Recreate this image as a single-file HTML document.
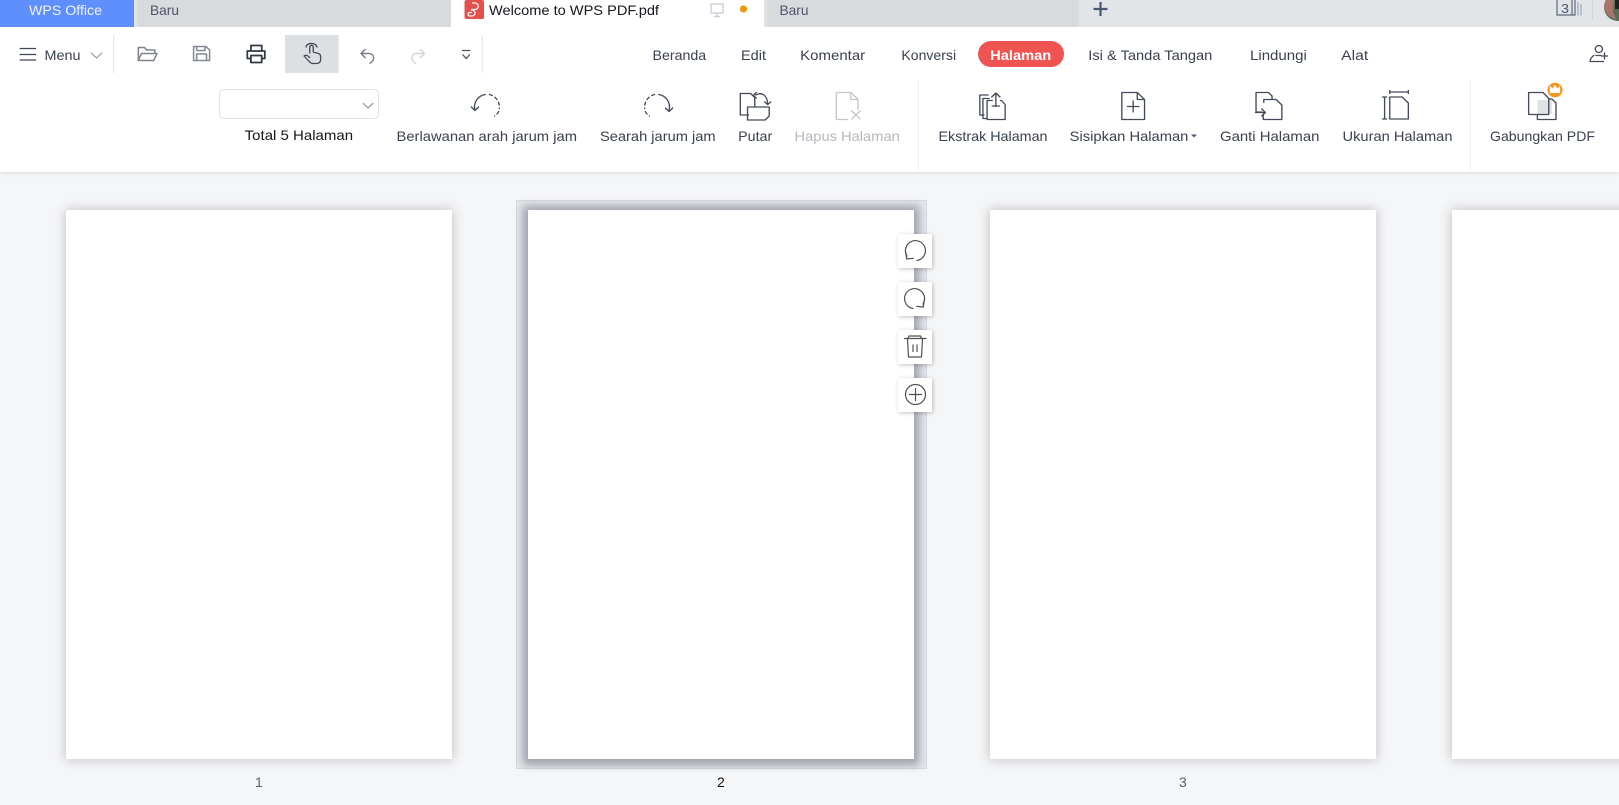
<!DOCTYPE html>
<html lang="id"><head><meta charset="utf-8"><title>WPS PDF</title>
<style>
html,body{margin:0;padding:0;width:1619px;height:805px;overflow:hidden;background:#f5f6f8}
body{position:relative;font-family:"Liberation Sans",sans-serif}
.abs{position:absolute}
#bar{left:0;top:27px;width:1619px;height:145px;background:#fff;box-shadow:0 1px 4px rgba(0,0,0,.12)}
.page{position:absolute;top:210px;width:386px;height:549px;background:#fff;box-shadow:0 0 11px 1px rgba(0,0,0,.2)}
#sel{left:516px;top:200px;width:409px;height:567px;background:#e4e6eb;border:1px solid #d8dae0}
#p2{left:528px;box-shadow:0 1px 8px 5px rgba(60,60,75,.4)}
.sb{position:absolute;left:898px;width:34px;height:34px;background:#fff;box-shadow:1px 1px 4px rgba(0,0,0,.24)}
svg{position:absolute;left:0;top:0}
text{font-family:"Liberation Sans",sans-serif;font-size:14px;fill:#3a4150}
.i{fill:none;stroke:#434a59;stroke-width:1.3;stroke-linejoin:round;stroke-linecap:round}
.g{fill:none;stroke:#c4c6cb;stroke-width:1.3;stroke-linejoin:round;stroke-linecap:round}
</style></head><body>
<div class="abs" id="bar"></div>
<div class="page" style="left:66px"></div>
<div class="abs" id="sel"></div>
<div class="page" id="p2"></div>
<div class="page" style="left:990px"></div>
<div class="page" style="left:1452px"></div>
<div class="sb" style="top:234px"></div>
<div class="sb" style="top:282px"></div>
<div class="sb" style="top:330px"></div>
<div class="sb" style="top:378px"></div>
<svg width="1619" height="805" viewBox="0 0 1619 805" xmlns="http://www.w3.org/2000/svg">
<!-- tab bar -->
<rect x="0" y="0" width="1619" height="27" fill="#e2e4e8"/>
<rect x="0" y="0" width="134" height="27" fill="#5f8ffc"/>
<rect x="137" y="0" width="314" height="27" fill="#d8dade"/>
<rect x="451" y="0" width="313" height="27" fill="#fff"/>
<rect x="767" y="0" width="312" height="27" fill="#d8dade"/>
<text x="29" y="15" textLength="73" lengthAdjust="spacingAndGlyphs" style="fill:#eef3ff">WPS Office</text>
<text x="150" y="15" textLength="29" lengthAdjust="spacingAndGlyphs" style="fill:#4d5568">Baru</text>
<rect x="464.500" y="0" width="19.500" height="19" rx="2" fill="#e5504c"/>
<path d="M472 12.500h-2.500a1.800 1.800 0 0 0 0 3.500h2.500a3 3 0 0 0 0-6h-1M472 3h3a3.200 3.200 0 0 1 0 6.500h-4" fill="none" stroke="#fff" stroke-width="1.200"/>
<text x="489" y="15" textLength="170" lengthAdjust="spacingAndGlyphs" style="fill:#14171d">Welcome to WPS PDF.pdf</text>
<path d="M711 4h12v9h-12zM717 13v3M714 16.500h6" fill="none" stroke="#c7cbd6" stroke-width="1.300"/>
<circle cx="743.500" cy="9" r="3.600" fill="#ec9a0c"/>
<text x="779.500" y="15" textLength="29" lengthAdjust="spacingAndGlyphs" style="fill:#4d5568">Baru</text>
<path d="M1100.500 2v14M1093.500 9h14" stroke="#4c586f" stroke-width="2.200" fill="none"/>
<path d="M1575 0v15h-18V0M1572 0v15.500" fill="none" stroke="#5f6a7d" stroke-width="1.200"/>
<path d="M1578 2v13.500M1581 4v11.500" fill="none" stroke="#a3a9b5" stroke-width="1.200"/>
<text x="1561" y="13" textLength="8" lengthAdjust="spacingAndGlyphs" style="fill:#4c586f;font-size:13px">3</text>
<line x1="1592.500" y1="0" x2="1592.500" y2="20" stroke="#d3d5da"/>
<circle cx="1618" cy="7" r="14" fill="#5b6a54"/>
<path d="M1604 7a14 14 0 0 1 6-11l4 4-1 12 3 7a14 14 0 0 1-12-12z" fill="#a9756a"/>
<rect x="1615" y="0" width="4" height="9" fill="#1f2421"/>
<!-- quick toolbar -->
<g transform="scale(1.0325,1)">
<path d="M19 48.500h16M19 54.500h16M19 60h16" stroke="#3f4656" stroke-width="1.300" fill="none"/>
<path d="M88 52.500l5.500 5.500 5.500-5.500" fill="none" stroke="#9a9ea8" stroke-width="1.200"/>
<line x1="110" y1="35" x2="110" y2="73" stroke="#e2e3e7"/>
<path d="M134 60V47.500h6l2 2.500h8v3M134 60.500l3-7h15l-3 7z" fill="none" stroke="#7d828d" stroke-width="1.500" stroke-linejoin="round"/>
<path d="M187.500 46.500h12l3.500 3.500v10.500h-15.500zM190.500 46.500v4h8v-4M190.500 60.500v-6.500h9.500v6.500" fill="none" stroke="#868a94" stroke-width="1.500" stroke-linejoin="round"/>
<path d="M243 51v-5.500h10.500V51M243 58.500h-3.500V51h17v7.500H253M243 55.500h10.500v7H243z" fill="none" stroke="#323947" stroke-width="1.700" stroke-linejoin="round"/>
<rect x="276" y="35" width="52" height="38" fill="#dce0e3"/>
<path d="M300 53v-6a1.700 1.700 0 0 1 3.400 0v5l5 1.500c1.500.5 2.100 1.500 2.100 3v3.500c0 2-1.500 3.500-4 3.500h-3.500c-1.500 0-2.500-.8-3.500-2l-5-5.500c1.500-1.500 3-1 5.500 1.500M296.500 47c0-4.500 9.500-5 10.500 0" class="i" style="stroke:#444a58"/>
<path d="M447.500 50.500h8M448 54.500l3.500 4 3.500-4" fill="none" stroke="#4a5161" stroke-width="1.300"/>
<line x1="467" y1="35" x2="467" y2="73" stroke="#e2e3e7"/>
<path d="M351.500 103l5 5 5-5" fill="none" stroke="#9ba0ab" stroke-width="1.300"/>
<path d="M460 110a12.500 12.500 0 0 1 10-15.500" class="i"/>
<path d="M474 94.500a12.500 12.500 0 0 1 9.500 14M483 111.500a12.500 12.500 0 0 1-4 4.500" class="i" stroke-dasharray="3 3"/>
<path d="M456.500 107l3.500 3.500 3.500-3.500" class="i"/>
</g>
<path d="M365.500 49l-4.500 4.500 4.500 4.500M361 53.500h8c5.500 0 6.500 7 .5 10" fill="none" stroke="#7d828d" stroke-width="1.500"/>
<path d="M420 49l4.500 4.500-4.500 4.500M424.500 53.500h-8c-5.500 0-6.500 7-.5 10" fill="none" stroke="#d5d7dc" stroke-width="1.500"/>
<text x="44.500" y="60" textLength="36" lengthAdjust="spacingAndGlyphs">Menu</text>
<!-- tabs -->
<text x="652.500" y="60" textLength="53.700" lengthAdjust="spacingAndGlyphs">Beranda</text>
<text x="741" y="60" textLength="25" lengthAdjust="spacingAndGlyphs">Edit</text>
<text x="800.200" y="60" textLength="65" lengthAdjust="spacingAndGlyphs">Komentar</text>
<text x="901.400" y="60" textLength="54.700" lengthAdjust="spacingAndGlyphs">Konversi</text>
<rect x="978" y="41" width="86" height="26" rx="13" fill="#ef5453"/>
<text x="990.200" y="60" textLength="61" lengthAdjust="spacingAndGlyphs" style="fill:#fff;font-weight:700">Halaman</text>
<text x="1088.300" y="60" textLength="124" lengthAdjust="spacingAndGlyphs">Isi &amp; Tanda Tangan</text>
<text x="1250" y="60" textLength="56.800" lengthAdjust="spacingAndGlyphs">Lindungi</text>
<text x="1341.200" y="60" textLength="27" lengthAdjust="spacingAndGlyphs">Alat</text>
<!-- ribbon -->
<rect x="219.500" y="89.500" width="159" height="29" rx="4" fill="none" stroke="#dfe1e6"/>
<text x="244.700" y="140" textLength="108.400" lengthAdjust="spacingAndGlyphs" style="fill:#14171d">Total 5 Halaman</text>
<text x="396.500" y="141" textLength="180.500" lengthAdjust="spacingAndGlyphs">Berlawanan arah jarum jam</text>
<text x="600" y="141" textLength="115.600" lengthAdjust="spacingAndGlyphs">Searah jarum jam</text>
<text x="738.200" y="141" textLength="34" lengthAdjust="spacingAndGlyphs">Putar</text>
<text x="794.500" y="141" textLength="105.300" lengthAdjust="spacingAndGlyphs" style="fill:#b4b7be">Hapus Halaman</text>
<text x="938.500" y="141" textLength="109" lengthAdjust="spacingAndGlyphs">Ekstrak Halaman</text>
<text x="1069.700" y="141" textLength="118.700" lengthAdjust="spacingAndGlyphs">Sisipkan Halaman</text>
<text x="1220" y="141" textLength="99.400" lengthAdjust="spacingAndGlyphs">Ganti Halaman</text>
<text x="1342.500" y="141" textLength="110" lengthAdjust="spacingAndGlyphs">Ukuran Halaman</text>
<text x="1490" y="141" textLength="105" lengthAdjust="spacingAndGlyphs">Gabungkan PDF</text>
<path d="M1191 134.500h6l-3 3z" fill="#555b68"/>
<line x1="918.500" y1="80" x2="918.500" y2="170" stroke="#eeeff1"/>
<line x1="1470.500" y1="80" x2="1470.500" y2="170" stroke="#eeeff1"/>
<!-- zone 2 icons -->
<g transform="translate(-17.550,0) scale(1.0325,1)">
<path d="M665 110a12.500 12.500 0 0 0-10-15.500" class="i"/>
<path d="M651 94.500a12.500 12.500 0 0 0-9.500 14M642 111.500a12.500 12.500 0 0 0 4 4.500" class="i" stroke-dasharray="3 3"/>
<path d="M661.500 108l3.500 3.500 3.500-3.500" class="i"/>
<path d="M742 115h-8V93.500h10l4 4v9M741 107h21v9l-4 4h-17zM749 95c5-3 11-1 11.500 9M746.500 95.500l3-3M746.500 95.500l3 2.500M757.500 102l3 2.500 3-2.500" class="i"/>
<path d="M838 119.500h-11V92.500h14l7 7v10" class="g"/>
<path d="M841 92.500v7h7M842 111l8 8M850 111l-8 8" class="g"/>
<path d="M970 115h-4V95h8M973 118.500h-4V98.500h6" class="i"/>
<path d="M973 100.500h5M986 100.500h1l3.500 4v15h-17.500v-19h1M981.500 93v13.500M977.500 97l4-4 4 4M978 106h7" class="i"/>
</g>
<!-- zone 3 icons -->
<g transform="translate(-33,0) scale(1.0325,1)">
<circle cx="1580.500" cy="49" r="3.500" fill="none" stroke="#434a59" stroke-width="1.300"/>
<path d="M1576 55c-2.500 2-4 4-4 6.500h13.500M1586 52.500v7M1582.500 56h7M1577 55.500h6" fill="none" stroke="#434a59" stroke-width="1.300"/>
</g>
<g transform="translate(-35.100,0) scale(1.0325,1)">
<path d="M1120.500 92.500h15l7 7v20h-22zM1135.500 92.500v7h7M1126 106.500h11M1131.500 101v11" class="i"/>
<path d="M1256 112h-5.500V92.500h12l3.500 3.500v3M1258 102.500v-3h12l5.500 5.500v14.500h-18V114M1250 112.500h9M1256 109l3.500 3.500-3.500 3.500" class="i"/>
<path d="M1375 97v22M1373 97h4M1373 119h4M1380 92h18M1380 90.500v3M1398 90.500v3M1380 97h12l6 6v16h-18z" class="i"/>
<rect x="1523" y="100" width="14" height="14" fill="#e1e2e5"/>
<path d="M1534 114.500h-19.500V92.500h14l5.500 6z" class="i"/>
<path d="M1523 119.500h18v-16.500l-4-4h-3M1523 119.500v-5" class="i"/>
<circle cx="1540" cy="90" r="7.300" fill="#f5951c"/>
<path d="M1535 85.500l2.500 3 2.500-3.500 2.500 3.500 2.500-3v7.500h-10z" fill="#fff"/>
</g>
<!-- side buttons -->
<g fill="none" stroke="#505050" stroke-width="1.200" stroke-linejoin="round" stroke-linecap="round">
<path d="M917 260.500A10 10 0 1 0 907 256"/><path d="M905.700 251.700l1 7.300 6.600-.7"/>
<path d="M913 308.500A10 10 0 1 1 923 304"/><path d="M924.300 299.700l-1 7.300-6.600-.7"/>
<path d="M904.500 338.500h21.500M908 338.500l1-2.500h11.500l1 2.500M907.500 339l1 18h13l1-18M913 345v6.500M917 345v6.500"/>
<circle cx="915.500" cy="394.500" r="10"/><path d="M915.500 388.500v12M909.500 394.500h12"/>
</g>
<!-- labels -->
<text x="255" y="787" style="fill:#5a5f6a;font-size:14px">1</text>
<text x="717" y="787" style="fill:#111;font-size:14px">2</text>
<text x="1179" y="787" style="fill:#5a5f6a;font-size:14px">3</text>
</svg>
</body></html>
